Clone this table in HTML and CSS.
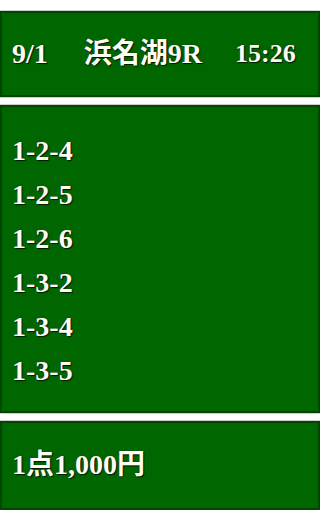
FILE: index.html
```html
<!DOCTYPE html>
<html lang="ja">
<head>
<meta charset="utf-8">
<title>浜名湖9R</title>
<link rel="stylesheet" href="styles.css">
</head>
<body>
<div class="page">
  <div class="box head">
    <span class="date">9/1</span>
    <span class="race">浜名湖9R</span>
    <span class="time">15:26</span>
  </div>
  <div class="box list">
    <div class="row">1-2-4</div>
    <div class="row">1-2-5</div>
    <div class="row">1-2-6</div>
    <div class="row">1-3-2</div>
    <div class="row">1-3-4</div>
    <div class="row">1-3-5</div>
  </div>
  <div class="box foot">1点1,000円</div>
</div>
</body>
</html>
```

FILE: styles.css
```css
html, body {
  margin: 0;
  padding: 0;
  background: #ffffff;
}
.page {
  padding-top: 11px;
  display: flex;
  flex-direction: column;
  gap: 8px;
  font-family: "Liberation Serif", "Noto Sans CJK JP", serif;
  font-weight: bold;
  font-size: 28px;
  color: #fffdf4;
  text-shadow: 1px 1px 1px #001a00, 0 0 1px #002200;
}
.box {
  background: #006600;
  border: 2px solid #034503;
  box-shadow: 0 0 0 1px #c9cfc9;
  padding: 0 10px;
  line-height: 44px;
}
.head {
  display: flex;
  align-items: center;
  padding-top: 19px;
  padding-bottom: 19px;
}
.race {
  margin-left: 36px;
}
.time {
  margin-left: 33px;
  font-size: 26px;
}
.list {
  padding-top: 22px;
  padding-bottom: 18px;
}
.foot {
  padding-top: 20px;
  padding-bottom: 21px;
}
```
